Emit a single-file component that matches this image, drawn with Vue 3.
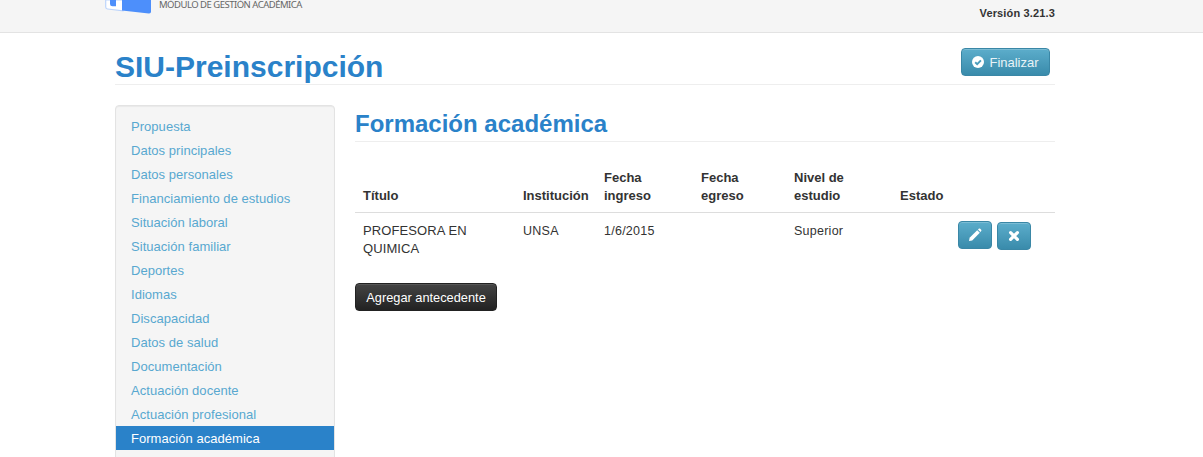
<script setup>
const menu = ['Propuesta','Datos principales','Datos personales','Financiamiento de estudios','Situación laboral','Situación familiar','Deportes','Idiomas','Discapacidad','Datos de salud','Documentación','Actuación docente','Actuación profesional','Formación académica']
</script>

<template>
  <div class="page">
    <header class="topbar">
      <div class="wrap top-inner">
        <div class="brand">
          <svg class="logo" width="47" height="15" viewBox="0 0 47 15">
            <path d="M0.7 0 L0.7 7 Q0.7 8.8 2.6 9 L18 10.8 L18 0 Z" fill="#fff" stroke="#bcd4fb" stroke-width="1.2"/>
            <path d="M5 0 L5 4 Q5 6.2 7.5 6.2 L11 6.2 L11 0 Z" fill="#4d8ffb"/>
            <path d="M17 0 L46 0 L46 11.5 Q46 13.6 43.8 13.4 L17 10.6 Z" fill="#4d8ffb"/>
          </svg>
          <span class="brand-text">MÓDULO DE GESTIÓN ACADÉMICA</span>
        </div>
        <span class="version">Versión 3.21.3</span>
      </div>
    </header>

    <div class="wrap">
      <div class="title-row">
        <h1>SIU-Preinscripción</h1>
        <button class="btn btn-info finish">
          <svg width="12" height="12" viewBox="0 0 12 12">
            <circle cx="6" cy="6" r="6" fill="#fff"/>
            <path d="M3.2 6.2 L5.2 8.1 L8.9 4.3" fill="none" stroke="#4a9cbc" stroke-width="1.9"/>
          </svg>
          Finalizar
        </button>
      </div>

      <div class="columns">
        <nav class="side">
          <a v-for="m in menu" :key="m" class="item" :class="{ active: m === 'Formación académica' }">{{ m }}</a>
        </nav>

        <main class="content">
          <h2>Formación académica</h2>
          <table>
            <thead>
              <tr>
                <th class="c1">Título</th>
                <th class="c2">Institución</th>
                <th class="c3">Fecha<br>ingreso</th>
                <th class="c4">Fecha<br>egreso</th>
                <th class="c5">Nivel de<br>estudio</th>
                <th class="c6">Estado</th>
                <th></th>
              </tr>
            </thead>
            <tbody>
              <tr>
                <td class="first">PROFESORA EN<br>QUIMICA</td>
                <td>UNSA</td>
                <td>1/6/2015</td>
                <td></td>
                <td>Superior</td>
                <td></td>
                <td class="actions">
                  <button class="btn btn-info icon" aria-label="Editar">
                    <svg width="14" height="14" viewBox="0 0 14 14">
                      <path d="M1 13 L1.6 9.8 L9.2 2.2 L11.8 4.8 L4.2 12.4 Z" fill="#fff"/>
                      <path d="M10 1.4 L11 0.6 Q11.6 0.2 12.2 0.8 L13.2 1.8 Q13.7 2.4 13.2 3 L12.5 4 Z" fill="#fff"/>
                    </svg>
                  </button>
                  <button class="btn btn-info icon" aria-label="Eliminar">
                    <svg width="12" height="12" viewBox="0 0 12 12">
                      <path d="M2.6 2.6 L9.4 9.4 M9.4 2.6 L2.6 9.4" stroke="#fff" stroke-width="3.2" stroke-linecap="round"/>
                    </svg>
                  </button>
                </td>
              </tr>
            </tbody>
          </table>
          <button class="btn btn-dark">Agregar antecedente</button>
        </main>
      </div>
    </div>
  </div>
</template>

<style>
html, body { margin: 0; overflow: hidden; background: #fff; }
</style>

<style scoped>
.page {
  height: 457px;
  overflow: hidden;
  font-family: "Liberation Sans", Arial, sans-serif;
  font-size: 13px;
  color: #222;
}
.topbar {
  height: 32px;
  background: #f5f5f5;
  border-bottom: 1px solid #e3e3e3;
}
.wrap { width: 940px; margin-left: 115px; }
.top-inner {
  height: 32px;
  display: flex;
  justify-content: space-between;
}
.brand { display: flex; align-items: flex-start; gap: 7px; margin-left: -10px; }
.logo { display: block; flex: none; }
.brand-text {
  font-family: "Noto Sans", sans-serif;
  font-size: 9.5px;
  letter-spacing: -0.5px;
  line-height: 10px;
  color: #666;
}
.version {
  font-size: 11px;
  font-weight: bold;
  line-height: 13px;
  margin-top: 7px;
  letter-spacing: 0.15px;
  color: #333;
}
.title-row {
  height: 51px;
  display: flex;
  justify-content: space-between;
  border-bottom: 1px solid #eee;
}
h1 {
  margin: 17px 0 0;
  font-size: 30px;
  line-height: 34px;
  font-weight: bold;
  color: #2a82c9;
}
.btn {
  display: inline-flex;
  align-items: center;
  justify-content: center;
  font-family: inherit;
  font-size: 13px;
  color: #fff;
  border-radius: 4px;
  padding: 0;
  cursor: pointer;
}
.btn-info {
  background: linear-gradient(#5cadcb, #398bab);
  border: 1px solid #3a87a6;
  box-shadow: inset 0 1px 0 rgba(255,255,255,.2);
}
.finish {
  width: 89px;
  height: 28px;
  margin: 15px 5px 0 0;
  gap: 5px;
  color: #e8f3f7;
}
.columns { display: flex; gap: 20px; margin-top: 20px; }
.side {
  width: 218px;
  flex: none;
  height: 400px;
  padding: 8px 0;
  background: #f5f5f5;
  border: 1px solid #e3e3e3;
  border-radius: 4px;
  box-shadow: inset 0 1px 1px rgba(0,0,0,.05);
}
.item {
  display: block;
  height: 23px;
  padding-top: 1px;
  line-height: 24px;
  padding-left: 15px;
  color: #58a8d0;
  letter-spacing: 0.04px;
}
.item.active { background: #2a82c9; color: #fff; }
.content { width: 700px; }
h2 {
  margin: 0;
  height: 36px;
  font-size: 24px;
  line-height: 38px;
  font-weight: bold;
  color: #2a82c9;
  border-bottom: 1px solid #eee;
}
table {
  width: 700px;
  margin-top: 19px;
  border-collapse: collapse;
  table-layout: fixed;
  color: #333;
}
th, td { line-height: 18px; text-align: left; }
th { padding: 8px 8px 7px; vertical-align: bottom; font-weight: bold; }
td {
  padding: 9px 8px 8px;
  vertical-align: top;
  border-top: 1px solid #ddd;
  font-size: 12.5px;
  letter-spacing: 0.25px;
}
td.first { font-size: 13px; letter-spacing: 0.1px; }
.c1 { width: 144px; }
.c2 { width: 65px; }
.c3 { width: 81px; }
.c4 { width: 77px; }
.c5 { width: 90px; }
.c6 { width: 42px; }
.actions { white-space: nowrap; padding-top: 8px; }
.icon {
  width: 34px;
  height: 28px;
  margin-right: 5px;
}
.btn-dark {
  display: flex;
  width: 142px;
  height: 28px;
  margin-top: 17px;
  font-size: 12.8px;
  background: linear-gradient(#444, #222);
  border: 1px solid #222;
  box-shadow: inset 0 1px 0 rgba(255,255,255,.1);
}
</style>
